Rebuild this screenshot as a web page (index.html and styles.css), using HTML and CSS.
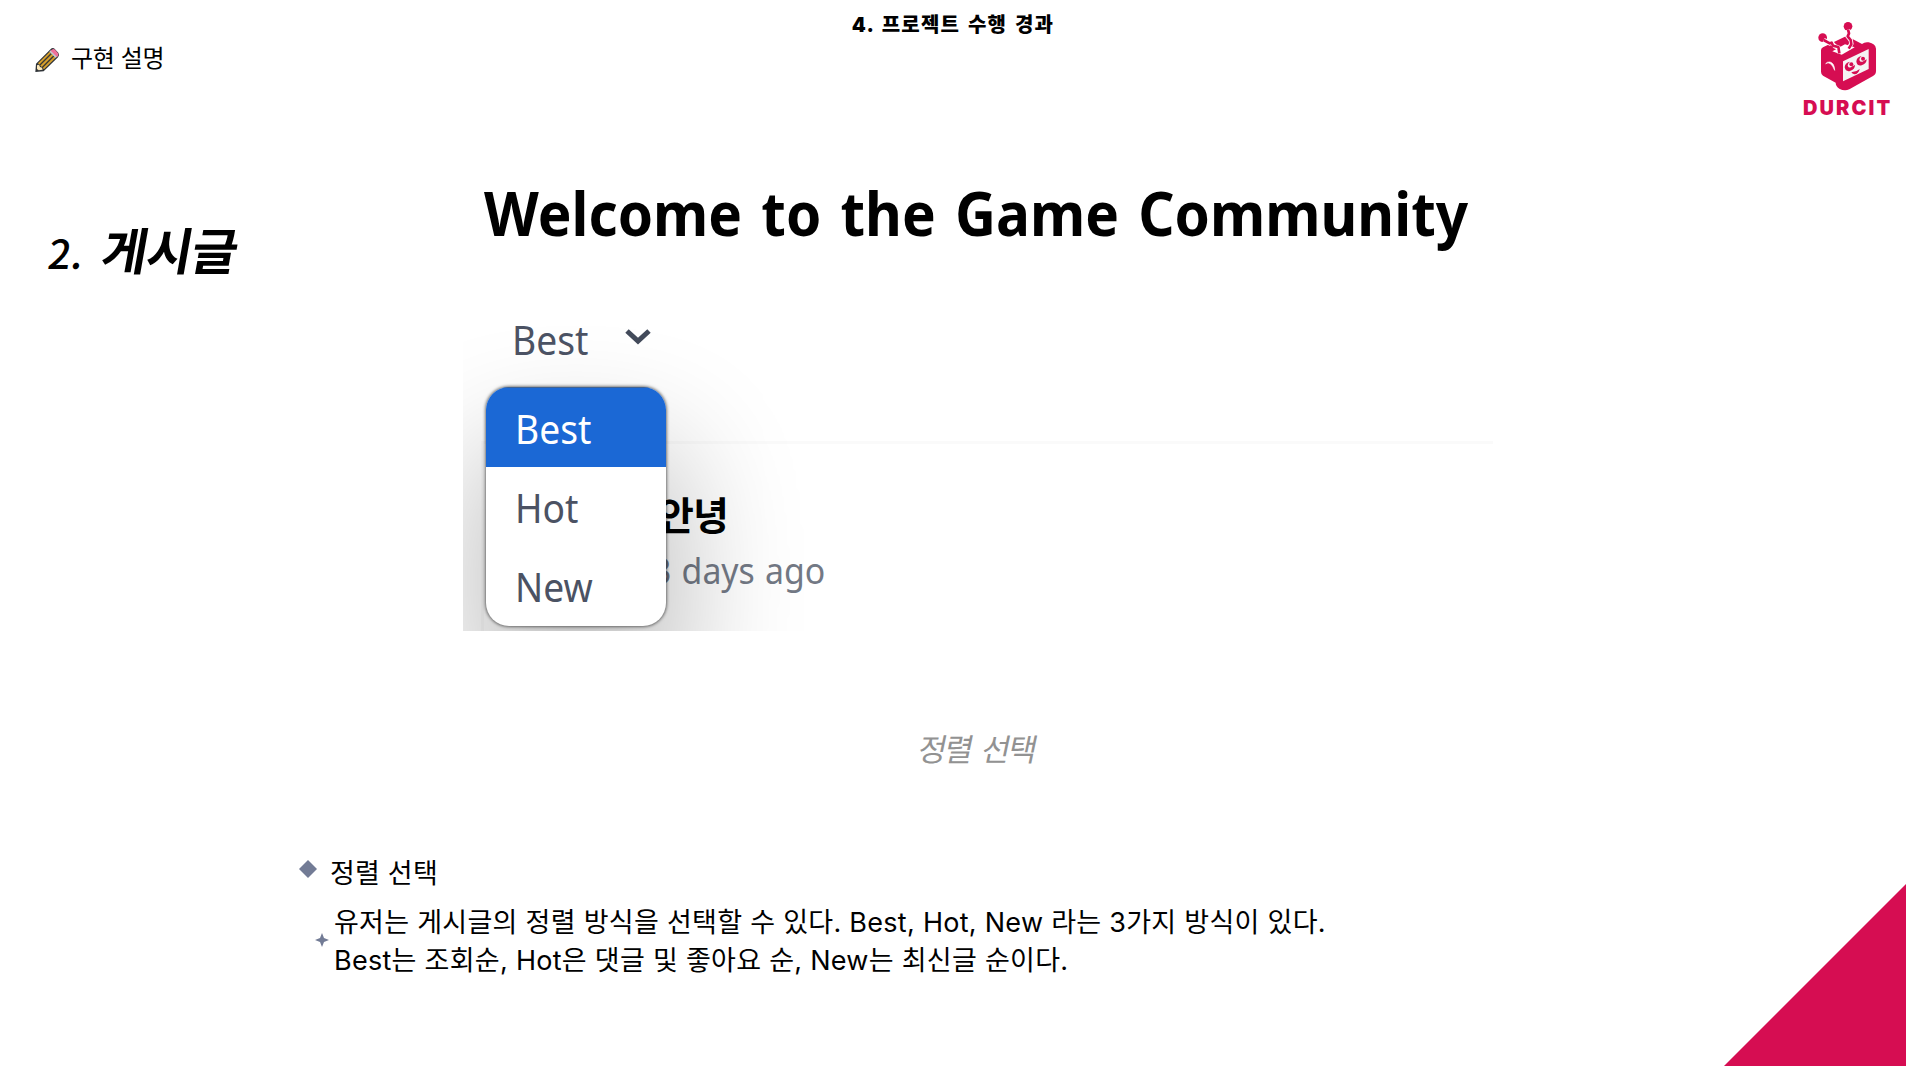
FILE: index.html
```html
<!DOCTYPE html>
<html lang="ko">
<head>
<meta charset="utf-8">
<title>4. 프로젝트 수행 경과</title>
<link rel="stylesheet" href="styles.css">
</head>
<body>
<div class="slide">
  <header class="top">
    <div class="topic">
      <svg class="pencil" viewBox="0 0 78 78">
        <path d="M4 75 6 50 48 8Q53 1 60 4L73 17Q78 24 72 31L29 73Z" fill="#2f3338"/>
        <path d="M12 49 47 14 65 32 30 67Z" fill="#d7a02c"/>
        <path d="M17 55 53 19M24 62 60 26" stroke="#3b3936" stroke-width="4"/>
        <path d="M46 14 51 9 70 28 65 33Z" fill="#c3ccd2"/>
        <path d="M50 11Q57 3 63 8L71 17Q76 23 69 30Z" fill="#f0709a"/>
        <path d="M9 55 15 53 18 60 24 62 26 68 14 70 9 66Z" fill="#fbe7b8"/>
      </svg>
      <span class="topic-text">구현 설명</span>
    </div>
    <h1 class="title">4. 프로젝트 수행 경과</h1>
    <div class="logo">
      <svg class="robot" viewBox="100 50 200 230">
        <g fill="#d60d52">
          <circle cx="129" cy="112" r="13"/>
          <circle cx="205" cy="78" r="13"/>
          <path d="M124 150Q124 144 130 141L194 110Q201 106 207 110L247 131Q255 124 267 126Q287 130 289 145V212Q289 222 280 227L209 267Q194 273 179 265Q168 258 168 247L130 226Q124 222 124 214Z"/>
        </g>
        <path d="M158 153 196 132 225 141 186 163Z" fill="#fff"/>
        <path d="M132 119 150 129 156 127 166 138 176 142 180 158M205 88 208 99 204 108 213 119 215 130 207 144" fill="none" stroke="#fff" stroke-width="13"/>
        <path d="M132 119 150 129 156 127 160 136 176 140 179 159M205 88 208 99 204 108 213 119 215 132 207 145" fill="none" stroke="#d60d52" stroke-width="8" stroke-linejoin="round"/>
        <path d="M190 183 267 146V206L190 243Z" fill="#f5f3f4"/>
        <path d="M138 190Q153 180 165 210Q164 188 151 185Q142 184 138 190Z" fill="#fff" stroke="#fff" stroke-width="2"/>
        <g fill="#d60d52">
          <path d="M211 184Q195 188 195 201Q198 215 211 212Q226 207 226 194L218 198Q208 206 204 196Q204 188 211 184Z"/>
          <circle cx="215" cy="192" r="6"/>
          <path d="M246 167Q230 171 230 184Q233 198 246 195Q261 190 261 177L253 181Q243 189 239 179Q239 171 246 167Z"/>
          <circle cx="250" cy="175" r="6"/>
          <path d="M215 215Q229 216 240 206Q237 221 224 222Q217 221 215 215Z"/>
        </g>
      </svg>
      <span class="brand">DURCIT</span>
    </div>
  </header>

  <main class="content">
    <h2 class="section"><span class="num">2.</span><span class="name">게시글</span></h2>
    <div class="shot">
      <h3 class="welcome"><span>Welcome to the Game Community</span></h3>
      <div class="select">
        <span class="ui">Best</span>
        <svg class="chevron" viewBox="0 0 28 18"><path d="M3 3 14 13 25 3" fill="none" stroke="#424a5a" stroke-width="5"/></svg>
      </div>
      <div class="list">
        <div class="post">
          <strong class="post-title">안녕</strong>
          <span class="ui post-date">3 days ago</span>
        </div>
        <ul class="menu">
          <li class="active"><span class="ui">Best</span></li>
          <li><span class="ui">Hot</span></li>
          <li><span class="ui">New</span></li>
        </ul>
      </div>
    </div>
  </main>

  <p class="caption"><span>정렬 선택</span></p>

  <section class="notes">
    <div class="note-head">
      <svg class="diamond" viewBox="0 0 18 18"><path d="M9 0 18 9 9 18 0 9Z" fill="#727b95"/></svg>
      <h4>정렬 선택</h4>
    </div>
    <div class="note-body">
      <svg class="star" viewBox="0 0 14 14"><path d="M7 0 9 5 14 7 9 9 7 14 5 9 0 7 5 5Z" fill="#727b95"/></svg>
      <p>유저는 게시글의 정렬 방식을 선택할 수 있다. Best, Hot, New 라는 3가지 방식이 있다.<br>Best는 조회순, Hot은 댓글 및 좋아요 순, New는 최신글 순이다.</p>
    </div>
  </section>
  <div class="corner"></div>
</div>
</body>
</html>
```
FILE: styles.css
```css
* { box-sizing: border-box; margin: 0; padding: 0; }
body { background: #fff; color: #000; font-family: Inter, "Noto Sans CJK KR", sans-serif; }
.slide { position: relative; width: 1906px; height: 1066px; overflow: hidden; display: flex; flex-direction: column; }

.top { height: 160px; display: grid; grid-template-columns: 1fr auto 1fr; align-items: start; }
.topic { display: flex; align-items: center; gap: 11px; padding: 44px 0 0 34px; height: 74px; }
.pencil { width: 26px; height: 26px; margin-top: 2px; }
.topic-text { font-size: 24px; line-height: 30px; letter-spacing: -.4px; white-space: nowrap; }
.title { font-size: 20px; line-height: 24px; font-weight: 900; letter-spacing: 1.2px; word-spacing: 2.6px; padding-top: 13px; white-space: nowrap; }
.logo { justify-self: end; display: flex; flex-direction: column; align-items: flex-start; width: 106px; padding-top: 17px; }
.robot { width: 66.7px; height: 76.7px; margin-left: 13px; }
.brand { font-size: 20px; line-height: 20px; font-weight: 900; color: #d60d52; letter-spacing: 2.1px; margin: 4px 0 0 3px; }

.content { display: flex; height: 471px; }
.section { width: 463px; padding: 58px 0 0 49px; display: flex; gap: 19px; align-items: flex-start; font-family: "Noto Sans CJK KR", sans-serif; }
.num { font-size: 40px; line-height: 68px; font-weight: 500; transform: skewX(-8deg); }
.name { font-size: 50px; line-height: 60px; font-weight: 700; transform: skewX(-10deg); letter-spacing: -1px; }

.shot { width: 1030px; height: 471px; overflow: hidden; display: flex; flex-direction: column; }
.welcome { height: 136px; padding: 11px 0 0 21px; font-family: "Noto Sans", sans-serif; font-weight: 700; font-size: 61px; line-height: 84px; white-space: nowrap; }
.welcome span { display: inline-block; width: 990px; transform: scaleX(.929); transform-origin: 0 50%; word-spacing: 4.8px; }
.ui { font-family: "Noto Sans", sans-serif; font-size: 40px; line-height: 56px; color: #4b5263; display: inline-block; transform: scaleX(.93); transform-origin: 0 50%; white-space: nowrap; }
.select { height: 91px; display: flex; padding: 16px 0 0 49px; align-items: flex-start; position: relative; z-index: 1; }
.select .ui { width: 112px; }
.chevron { width: 28px; height: 18px; margin-top: 16px; }
.list { position: relative; height: 244px; display: flow-root; }
.post { margin: 54px 0 0 18px; height: 220px; border: 3px solid #fafafa; border-right: 0; padding: 43px 0 0 174px; display: flex; flex-direction: column; }
.post-title { font-family: "Noto Sans CJK KR", sans-serif; font-size: 39px; line-height: 52px; letter-spacing: -1px; }
.post-date { font-size: 36px; line-height: 54px; color: #737985; margin: 5px 0 0 -6px; transform: scaleX(.94); word-spacing: 1.5px; }
.menu { position: absolute; left: 23px; top: 0; width: 180px; height: 239px; list-style: none; background: #fff; border-radius: 23px; overflow: hidden; box-shadow: 0 0 3px 1px rgba(0,0,0,.5), 0 75px 120px 18px rgba(0,0,0,.24); }
.menu li { height: 79px; padding: 13px 0 0 29px; }
.menu .active { height: 80px; background: #1b68d5; border-top: 1px solid #3e6294; }
.active .ui { color: #fff; }

.caption { height: 209px; padding: 95px 0 0 919px; font-size: 31px; line-height: 44px; color: #929292; font-family: "Noto Sans CJK KR", sans-serif; }
.caption span { display: inline-block; transform: skewX(-12deg); letter-spacing: -2px; word-spacing: 4px; }

.notes { padding: 15px 0 0 299px; font-size: 27px; line-height: 38px; }
.note-head { display: flex; align-items: center; gap: 13px; height: 38px; }
.note-head h4 { font-size: 27px; font-weight: 400; letter-spacing: .2px; }
.diamond { width: 18px; height: 18px; margin-top: -11px; }
.note-body { display: flex; align-items: center; gap: 5px; padding: 11px 0 0 16px; }
.star { width: 14px; height: 14px; margin-top: -4px; }
.note-body p { white-space: nowrap; letter-spacing: .28px; }
.corner { position: absolute; right: 0; bottom: 0; width: 182px; height: 182px; background: #d60d52; clip-path: polygon(100% 0, 100% 100%, 0 100%); }
```
